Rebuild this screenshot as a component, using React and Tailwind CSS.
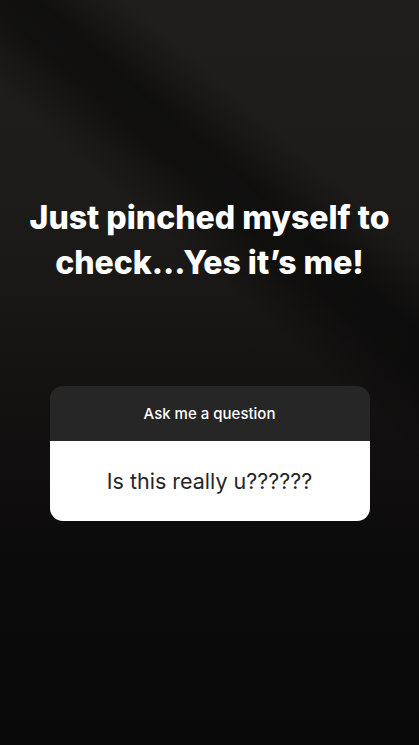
export default function App() {
  return (
    <div className="relative h-[745px] w-[419px] overflow-hidden bg-[#141413] font-['Inter','Liberation_Sans',sans-serif]">
      {/* Backdrop: dim photo with a dark diagonal streak */}
      <div className="absolute inset-0 bg-[linear-gradient(180deg,#1f1e1c_0%,#1c1b19_30%,#141312_50%,#0c0b0b_75%,#090909_100%)]" />
      <div className="absolute inset-0 bg-[linear-gradient(41deg,transparent_59%,rgba(6,6,6,0.55)_66%,rgba(6,6,6,0.6)_70%,transparent_77%)]" />

      <div className="relative flex flex-col items-center">
        <h1 className="mt-[195px] text-center text-[32px] font-extrabold leading-[45px] tracking-[0px] text-white">
          Just pinched myself to
          <br />
          check...Yes it’s me!
        </h1>

        <div className="mt-[101px] w-[320px] overflow-hidden rounded-[13px]">
          <div className="flex h-[55px] items-center justify-center bg-[#262626] pt-[1px] text-[15px] font-medium text-white">
            Ask me a question
          </div>
          <div className="flex h-[80px] items-center justify-center bg-white text-[21.5px] text-[#262626]">
            Is this really u??????
          </div>
        </div>
      </div>
    </div>
  );
}
